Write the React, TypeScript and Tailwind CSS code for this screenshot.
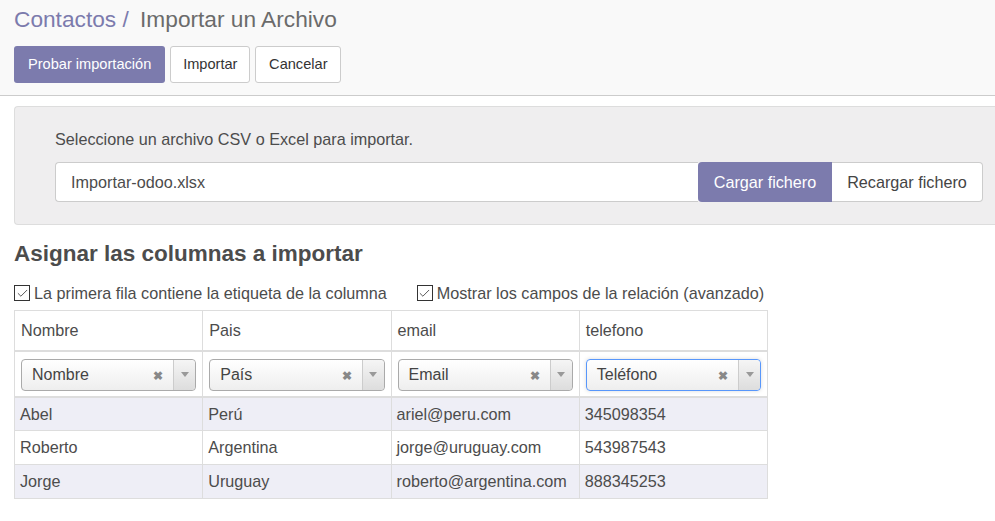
import { Check } from "lucide-react"

const columns = [
  { header: "Nombre", field: "Nombre" },
  { header: "Pais", field: "País" },
  { header: "email", field: "Email" },
  { header: "telefono", field: "Teléfono", focused: true },
]

const rows = [
  ["Abel", "Perú", "ariel@peru.com", "345098354"],
  ["Roberto", "Argentina", "jorge@uruguay.com", "543987543"],
  ["Jorge", "Uruguay", "roberto@argentina.com", "888345253"],
]

function FieldSelect({ label, focused }: { label: string; focused?: boolean }) {
  return (
    <div
      className={`flex h-[32px] items-center rounded-[4px] border bg-gradient-to-b from-white to-[#eeeeee] ${
        focused ? "border-[#5897fb] shadow-[0_0_4px_rgba(0,0,0,0.15)]" : "border-[#aaaaaa]"
      }`}
    >
      <span className="flex-1 pl-[10px] text-[16px] text-[#444]">{label}</span>
      <span className="mr-[10px] mt-[3px] text-[12px] font-bold leading-none text-[#888]">✖</span>
      <span className="flex h-full w-[22px] items-center justify-center rounded-r-[4px] border-l border-[#cccccc] bg-gradient-to-b from-[#f5f5f5] to-[#dddddd]">
        <span className="h-0 w-0 border-x-[4px] border-t-[5px] border-x-transparent border-t-[#999]" />
      </span>
    </div>
  )
}

function Checkbox({ label }: { label: string }) {
  return (
    <label className="flex items-center gap-[4px]">
      <span className="flex h-[16px] w-[16px] items-center justify-center border border-[#333] bg-white">
        <Check size={13} strokeWidth={1.5} className="text-[#333]" />
      </span>
      <span>{label}</span>
    </label>
  )
}

export default function App() {
  return (
    <div className="min-h-[521px] bg-white text-[16.2px] text-[#4c4c4c] font-['Liberation_Sans',Arial,sans-serif]">
      <div className="border-b border-[#cccccc] bg-[#f9f9f9] px-[14px] pt-[5px] pb-[12px]">
        <h1 className="text-[22.7px] leading-[28px]">
          <span className="text-[#7c7bad]">Contactos / </span>
          <span className="ml-[5px] text-[#6b6b6b]">Importar un Archivo</span>
        </h1>
        <div className="mt-[13px] flex gap-[5px] text-[14.6px]">
          <button className="h-[37px] rounded-[3px] bg-[#7c7bad] px-[14px] text-white">Probar importación</button>
          <button className="h-[37px] w-[80px] rounded-[3px] border border-[#cccccc] bg-white text-[#333]">Importar</button>
          <button className="h-[37px] w-[86px] rounded-[3px] border border-[#cccccc] bg-white text-[#333]">Cancelar</button>
        </div>
      </div>

      <div className="px-[14px] pt-[10px]">
        <div className="-mr-[14px] rounded-l-[4px] border border-r-0 border-[#dddddd] bg-[#efeeef] pl-[40px] pr-[12px] pt-[22px] pb-[22px]">
          <p className="leading-[20px]">Seleccione un archivo CSV o Excel para importar.</p>
          <div className="mt-[13px] flex h-[40px]">
            <div className="flex flex-1 items-center rounded-l-[4px] border border-r-0 border-[#cccccc] bg-white pl-[15px]">
              Importar-odoo.xlsx
            </div>
            <button className="w-[134px] rounded-l-[4px] bg-[#7c7bad] text-white">Cargar fichero</button>
            <button className="w-[151px] rounded-r-[4px] border border-l-0 border-[#cccccc] bg-white text-[#444]">Recargar fichero</button>
          </div>
        </div>

        <h2 className="mt-[16px] text-[22.5px] font-bold leading-[26px] text-[#4c4c4c]">Asignar las columnas a importar</h2>

        <div className="mt-[16px] flex gap-[30px] leading-[20px]">
          <Checkbox label="La primera fila contiene la etiqueta de la columna" />
          <Checkbox label="Mostrar los campos de la relación (avanzado)" />
        </div>

        <table className="mt-[7px] w-[754px] table-fixed border-collapse">
          <thead>
            <tr className="h-[40px]">
              {columns.map((c) => (
                <th key={c.header} className="border border-b-2 border-[#dddddd] px-[6px] text-left font-normal">
                  {c.header}
                </th>
              ))}
            </tr>
            <tr className="h-[46px]">
              {columns.map((c) => (
                <th key={c.header} className="border border-b-2 border-[#dddddd] px-[6px] pt-[2px] text-left font-normal">
                  <FieldSelect label={c.field} focused={c.focused} />
                </th>
              ))}
            </tr>
          </thead>
          <tbody>
            {rows.map((r, i) => (
              <tr key={i} className={`h-[34px] ${i % 2 === 0 ? "bg-[#eeeef6]" : "bg-white"}`}>
                {r.map((cell, j) => (
                  <td key={j} className="border border-[#dddddd] px-[5px]">
                    {cell}
                  </td>
                ))}
              </tr>
            ))}
          </tbody>
        </table>
      </div>
    </div>
  )
}
